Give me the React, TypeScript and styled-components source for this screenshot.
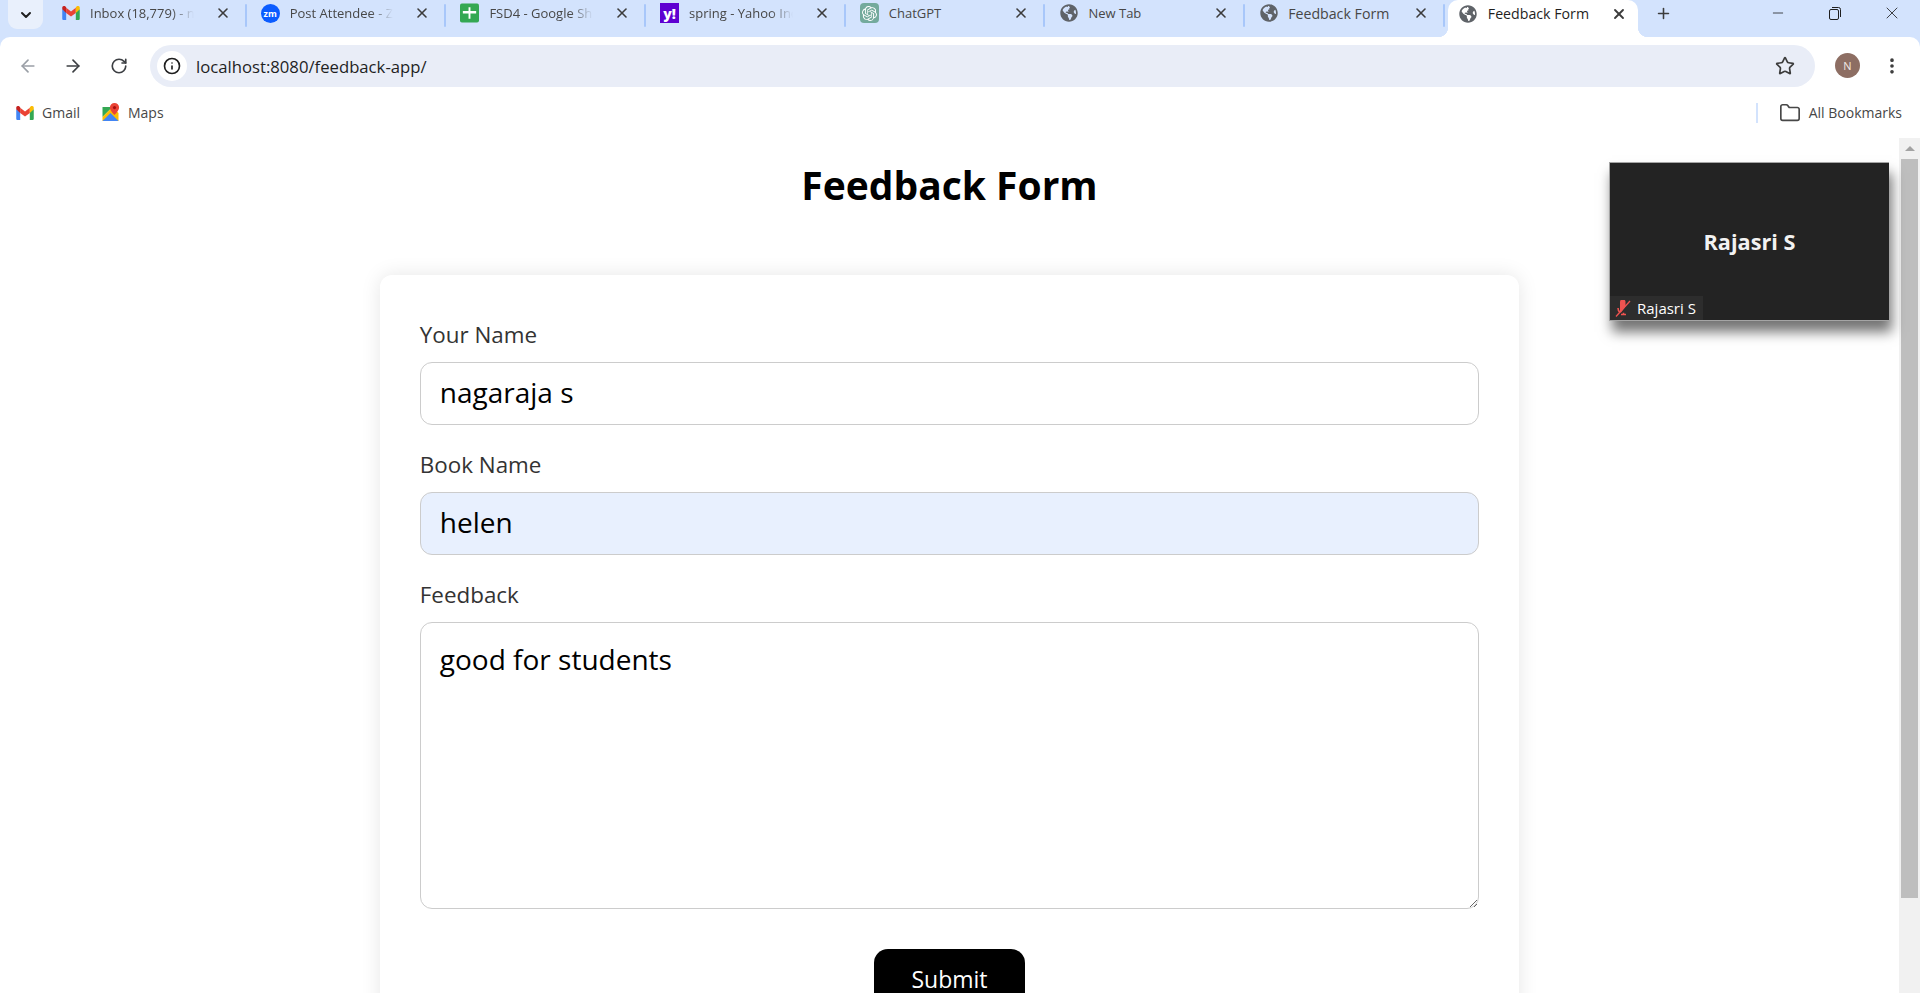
import React from "react";
import styled, { createGlobalStyle } from "styled-components";
import { ArrowLeft, ArrowRight, RotateCw, Info, Star, Folder, X, Plus, Minus, ChevronDown, EllipsisVertical } from "lucide-react";
import { FaGlobeAmericas } from "react-icons/fa";
import { SiOpenai } from "react-icons/si";

const Global = createGlobalStyle`
  html, body { margin: 0; padding: 0; height: 100%; overflow: hidden; background: #fff; }
  #root { height: 100%; }
  * { box-sizing: border-box; }
`;

const Shell = styled.div`
  position: relative;
  height: 993px;
  display: flex;
  flex-direction: column;
  overflow: hidden;
  font-family: "Open Sans", "Noto Sans", sans-serif;
`;

const TabStrip = styled.div`
  height: 37px;
  flex: none;
  background: #d3e3fd;
  display: flex;
  align-items: flex-start;
  padding-left: 8px;
`;

const TabSearch = styled.div`
  width: 35px;
  height: 29px;
  margin-right: 3px;
  background: #e9f0fc;
  border-radius: 0 0 9px 9px;
  display: flex;
  align-items: center;
  justify-content: center;
  color: #1f1f1f;
`;

const Tab = styled.div`
  position: relative;
  width: 199.7px;
  height: 26px;
  flex: none;
  display: flex;
  align-items: center;
  padding: 0 15px;
  gap: 10px;
  color: #474747;
  &::after {
    content: "";
    position: absolute;
    right: -1px;
    top: 4px;
    height: 23px;
    width: 2px;
    border-radius: 1px;
    background: #a8c7fa;
  }
`;

const ActiveTab = styled.div`
  position: relative;
  width: 190px;
  height: 37px;
  flex: none;
  margin-left: 4px;
  background: #fff;
  border-radius: 10px 10px 0 0;
  display: flex;
  align-items: flex-start;
  padding: 4px 11px 0 11px;
  gap: 10px;
  color: #1f1f1f;
  &::before, &::after {
    content: "";
    position: absolute;
    bottom: 0;
    width: 10px;
    height: 10px;
  }
  &::before { left: -10px; background: radial-gradient(circle at 0 0, transparent 10px, #fff 10.5px); }
  &::after { right: -10px; background: radial-gradient(circle at 100% 0, transparent 10px, #fff 10.5px); }
`;

const IconSlot = styled.span`
  width: 19px;
  height: 19px;
  flex: none;
  display: flex;
  align-items: center;
  justify-content: center;
`;

const TabTitle = styled.span<{ $fade?: boolean; $wide?: boolean }>`
  flex: 1;
  min-width: 0;
  font-size: ${(p) => (p.$wide ? "14.2px" : "13px")};
  line-height: 19px;
  white-space: nowrap;
  overflow: hidden;
  ${(p) => p.$fade && `
    margin-right: 11px;
    mask-image: linear-gradient(to right, #000 78%, transparent 100%);
  `}
`;

const TabClose = styled.span`
  width: 16px;
  height: 19px;
  flex: none;
  display: flex;
  align-items: center;
  justify-content: center;
  color: #3c3c3c;
`;

const NewTab = styled.div`
  width: 26px;
  height: 26px;
  margin-left: 13px;
  display: flex;
  align-items: center;
  justify-content: center;
  color: #3c3c3c;
`;

const WindowControls = styled.div`
  margin-left: auto;
  display: flex;
  height: 26px;
`;

const WindowButton = styled.div`
  width: 57px;
  display: flex;
  align-items: center;
  justify-content: center;
  color: #1f1f1f;
`;

const ToolbarWrap = styled.div`
  background: #d3e3fd;
  flex: none;
`;

const Toolbar = styled.div`
  height: 53px;
  background: #fff;
  display: flex;
  align-items: flex-start;
  padding: 8px 0 0 5px;
  border-radius: 10px 10px 0 0;
`;

const NavButton = styled.div<{ $dim?: boolean }>`
  width: 45.5px;
  height: 42px;
  display: flex;
  align-items: center;
  justify-content: center;
  color: ${(p) => (p.$dim ? "#9a9fa6" : "#3c3f43")};
`;

const Omnibox = styled.div`
  width: 1665px;
  height: 42px;
  margin-left: 8.5px;
  background: #e9edf7;
  border-radius: 21px;
  display: flex;
  align-items: center;
  padding: 0 14px 0 7px;
`;

const InfoChip = styled.div`
  width: 30px;
  height: 30px;
  border-radius: 50%;
  background: #fff;
  display: flex;
  align-items: center;
  justify-content: center;
  color: #1f1f1f;
`;

const UrlText = styled.span`
  flex: 1;
  margin-left: 9px;
  font-size: 16.7px;
  color: #1f1f1f;
`;

const StarSlot = styled.div`
  width: 24px;
  display: flex;
  justify-content: center;
  margin-right: 4px;
  color: #3c3c3c;
`;

const Avatar = styled.div`
  width: 25px;
  height: 25px;
  margin: 8px 0 0 20px;
  border-radius: 50%;
  background: #8d6e63;
  color: #f2e9e4;
  font-size: 11px;
  display: flex;
  align-items: center;
  justify-content: center;
`;

const Kebab = styled.div`
  width: 22px;
  height: 42px;
  margin-left: 21px;
  color: #3c3c3c;
  display: flex;
  align-items: center;
  justify-content: center;
`;

const BookmarkBar = styled.div`
  height: 48px;
  flex: none;
  background: #fff;
  display: flex;
  align-items: center;
  padding: 0 18px 3px 16px;
  font-size: 14px;
  color: #474747;
`;

const Bookmark = styled.div`
  display: flex;
  align-items: center;
  gap: 8px;
  margin-right: 21px;
`;

const BookmarkEnd = styled(Bookmark)`
  gap: 8px;
  margin-right: 0;
`;

const BookmarkDivider = styled.div`
  width: 2px;
  height: 20px;
  margin-left: auto;
  margin-right: 21px;
  background: #d3e3fd;
`;

const Viewport = styled.div`
  flex: 1;
  min-height: 0;
  display: flex;
`;

const Page = styled.main`
  flex: 1;
  min-width: 0;
  background: #fff;
  overflow: hidden;
`;

const Heading = styled.h1`
  margin: 0;
  padding-top: 23px;
  height: 137px;
  text-align: center;
  font-size: 39px;
  line-height: 48px;
  font-weight: 700;
  color: #000;
`;

const Card = styled.form`
  width: 60%;
  margin: 0 auto;
  padding: 40px;
  background: #fff;
  border-radius: 12px;
  box-shadow: 0 0 20px rgba(0, 0, 0, 0.1);
`;

const Label = styled.label`
  display: block;
  height: 47px;
  padding-top: 5px;
  font-size: 22.4px;
  line-height: 30px;
  color: #333;
`;

const fieldStyles = `
  display: block;
  width: 100%;
  padding: 0 19px 4px;
  border: 1px solid #ccc;
  border-radius: 12px;
  font-family: "Open Sans", "Noto Sans", sans-serif;
  font-size: 28px;
  color: #000;
  outline: none;
`;

const TextInput = styled.input<{ $filled?: boolean }>`
  ${fieldStyles}
  height: 63px;
  margin-bottom: 20px;
  background: ${(p) => (p.$filled ? "#e8f0fe" : "#fff")};
`;

const TextArea = styled.textarea`
  ${fieldStyles}
  height: 287px;
  padding-top: 18px;
  margin-bottom: 40px;
  line-height: 36px;
  background: #fff;
`;

const SubmitRow = styled.div`
  display: flex;
  justify-content: center;
`;

const Submit = styled.button`
  width: 151px;
  height: 60px;
  border: none;
  border-radius: 14px;
  background: #000;
  color: #fff;
  font-family: "Open Sans", "Noto Sans", sans-serif;
  font-size: 23px;
`;

const Scrollbar = styled.div`
  width: 21px;
  flex: none;
  background: #f1f1f1;
  display: flex;
  flex-direction: column;
  align-items: center;
  padding-top: 8px;
`;

const ScrollArrow = styled.div`
  width: 0;
  height: 0;
  border-left: 5px solid transparent;
  border-right: 5px solid transparent;
  border-bottom: 5px solid #a3a3a3;
`;

const ScrollThumb = styled.div`
  width: 17px;
  height: 739px;
  margin-top: 8px;
  background: #bebebe;
`;

const VideoWindow = styled.aside`
  position: absolute;
  left: 1609px;
  top: 162px;
  width: 280px;
  height: 159px;
  background: #232323;
  border: 1px solid #a5a5a5;
  border-width: 1px 0 1px 1px;
  box-shadow: 3px 11px 12px rgba(0, 0, 0, 0.55);
  display: flex;
  align-items: center;
  justify-content: center;
  color: #f2f2f2;
`;

const VideoName = styled.div`
  font-size: 21.7px;
  font-weight: 700;
`;

const VideoTag = styled.div`
  position: absolute;
  left: 0;
  bottom: 0;
  width: 93px;
  height: 24px;
  background: #2d2d2d;
  display: flex;
  align-items: center;
  gap: 6px;
  padding-left: 5px;
  font-size: 15px;
  color: #fff;
`;

const MuteIcon = () => (
  <svg width="16" height="17" viewBox="0 0 16 17" fill="none">
    <path d="M5 1.500a2.800 2.800 0 0 1 5.500 0v5L6 12.500H5z" fill="#ef5350" />
    <path d="M3 8c0 2 .5 3.500 2 4.500M6 14.500h5M8.500 12.800v1.700" stroke="#ef5350" strokeWidth="1.600" />
    <path d="M1 16.500 15 1" stroke="#ef5350" strokeWidth="1.300" />
  </svg>
);

const GmailIcon = () => (
  <svg width="18" height="14" viewBox="0 0 20 16">
    <path d="M0 2v12.500C0 15.300.7 16 1.500 16H4.500V7L0 3.500z" fill="#4285f4" />
    <path d="M20 2v12.500c0 .8-.7 1.500-1.500 1.500H15.500V7L20 3.500z" fill="#34a853" />
    <path d="M4.500 8V2L10 6.200 15.500 2v6L10 12z" fill="#ea4335" />
    <path d="M0 3.600V2C0 .2 2 -.6 3.300 .4L4.500 1.400V8z" fill="#c5221f" />
    <path d="M20 3.600V2c0-1.800-2-2.600-3.300-1.600L15.500 1.400V8z" fill="#fbbc04" />
  </svg>
);

const ZoomIcon = styled.span`
  width: 19px;
  height: 19px;
  border-radius: 50%;
  background: #0b5cff;
  color: #fff;
  font-size: 9px;
  font-weight: 700;
  display: flex;
  align-items: center;
  justify-content: center;
`;

const SheetsIcon = () => (
  <svg width="20" height="20" viewBox="0 0 20 20">
    <rect width="20" height="20" rx="2" fill="#34a853" />
    <path d="M3 8h6V4h2v4h6v2.400h-6V16H9v-5.600H3z" fill="#fff" />
  </svg>
);

const YahooIcon = styled.span`
  width: 20px;
  height: 20px;
  background: #5f01d1;
  color: #fff;
  font-size: 14px;
  font-weight: 800;
  display: flex;
  align-items: center;
  justify-content: center;
`;

const GptIcon = styled.span`
  width: 20px;
  height: 20px;
  border-radius: 4px;
  background: #74aa9c;
  color: #fff;
  display: flex;
  align-items: center;
  justify-content: center;
`;

const MapsIcon = () => (
  <svg width="19" height="19" viewBox="0 0 18 19">
    <path d="M1 4h10l-10 10z" fill="#34a853" />
    <path d="M1 14l10-10 6 6v8H1z" fill="#fbbc04" />
    <path d="M1 18l8-8 8 8z" fill="#4285f4" />
    <path d="M13 0a4.600 4.600 0 0 0-4.600 4.600C8.400 8 13 12 13 12s4.600-4 4.600-7.400A4.600 4.600 0 0 0 13 0z" fill="#ea4335" />
    <circle cx="13" cy="4.600" r="1.600" fill="#a50e0e" />
  </svg>
);

const RestoreIcon = () => (
  <svg width="14" height="14" viewBox="0 0 14 14" fill="none" stroke="currentColor" strokeWidth="1">
    <rect x="1.500" y="3.500" width="9" height="10" rx="1.500" />
    <path d="M4 1.500h6.500a2 2 0 0 1 2 2V11" />
  </svg>
);

const globe = <FaGlobeAmericas size={18} color="#5f6368" />;

const tabs: { icon: React.ReactNode; title: string; fade?: boolean; wide?: boolean }[] = [
  { icon: <GmailIcon />, title: "Inbox (18,779) - nagaraja", fade: true },
  { icon: <ZoomIcon>zm</ZoomIcon>, title: "Post Attendee - Zoom", fade: true },
  { icon: <SheetsIcon />, title: "FSD4 - Google Sheets", fade: true },
  { icon: <YahooIcon>y!</YahooIcon>, title: "spring - Yahoo India Search", fade: true },
  { icon: <GptIcon><SiOpenai size={15} /></GptIcon>, title: "ChatGPT" },
  { icon: globe, title: "New Tab" },
  { icon: globe, title: "Feedback Form", wide: true },
];

export default function App() {
  return (
    <Shell>
      <Global />
      <TabStrip>
        <TabSearch><ChevronDown size={16} strokeWidth={3} /></TabSearch>
        {tabs.map((t) => (
          <Tab key={t.title}>
            <IconSlot>{t.icon}</IconSlot>
            <TabTitle $fade={t.fade} $wide={t.wide}>{t.title}</TabTitle>
            <TabClose><X size={16} strokeWidth={2.4} /></TabClose>
          </Tab>
        ))}
        <ActiveTab>
          <IconSlot>{globe}</IconSlot>
          <TabTitle $wide>Feedback Form</TabTitle>
          <TabClose><X size={16} strokeWidth={2.8} /></TabClose>
        </ActiveTab>
        <NewTab><Plus size={17} strokeWidth={2.2} /></NewTab>
        <WindowControls>
          <WindowButton><Minus size={16} strokeWidth={1.2} /></WindowButton>
          <WindowButton><RestoreIcon /></WindowButton>
          <WindowButton><X size={20} strokeWidth={1} /></WindowButton>
        </WindowControls>
      </TabStrip>
      <ToolbarWrap>
        <Toolbar>
          <NavButton $dim><ArrowLeft size={20} /></NavButton>
          <NavButton><ArrowRight size={20} /></NavButton>
          <NavButton><RotateCw size={18} strokeWidth={2.2} /></NavButton>
          <Omnibox>
            <InfoChip><Info size={18} strokeWidth={2.2} /></InfoChip>
            <UrlText>localhost:8080/feedback-app/</UrlText>
            <StarSlot><Star size={20} strokeWidth={2} /></StarSlot>
          </Omnibox>
          <Avatar>N</Avatar>
          <Kebab><EllipsisVertical size={20} strokeWidth={2.4} /></Kebab>
        </Toolbar>
      </ToolbarWrap>
      <BookmarkBar>
        <Bookmark><GmailIcon /><span>Gmail</span></Bookmark>
        <Bookmark><MapsIcon /><span>Maps</span></Bookmark>
        <BookmarkDivider />
        <BookmarkEnd><Folder size={22} strokeWidth={1.8} /><span>All Bookmarks</span></BookmarkEnd>
      </BookmarkBar>
      <Viewport>
        <Page>
          <Heading>Feedback Form</Heading>
          <Card onSubmit={(e) => e.preventDefault()}>
            <Label htmlFor="name">Your Name</Label>
            <TextInput id="name" defaultValue="nagaraja s" />
            <Label htmlFor="book">Book Name</Label>
            <TextInput id="book" defaultValue="helen" $filled />
            <Label htmlFor="feedback">Feedback</Label>
            <TextArea id="feedback" defaultValue="good for students" />
            <SubmitRow><Submit type="submit">Submit</Submit></SubmitRow>
          </Card>
        </Page>
        <Scrollbar>
          <ScrollArrow />
          <ScrollThumb />
        </Scrollbar>
      </Viewport>
      <VideoWindow>
        <VideoName>Rajasri S</VideoName>
        <VideoTag><MuteIcon /><span>Rajasri S</span></VideoTag>
      </VideoWindow>
    </Shell>
  );
}
